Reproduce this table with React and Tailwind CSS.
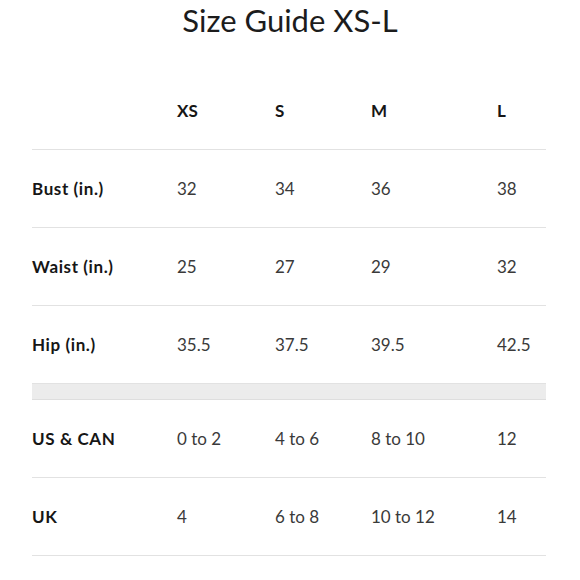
import React from "react";

const sizes = ["XS", "S", "M", "L"];

const bodyRows = [
  { label: "Bust (in.)", values: ["32", "34", "36", "38"] },
  { label: "Waist (in.)", values: ["25", "27", "29", "32"] },
  { label: "Hip (in.)", values: ["35.5", "37.5", "39.5", "42.5"] },
];

const countryRows = [
  { label: "US & CAN", values: ["0 to 2", "4 to 6", "8 to 10", "12"] },
  { label: "UK", values: ["4", "6 to 8", "10 to 12", "14"] },
];

function Row({ label, values, bold }) {
  return (
    <div className="grid grid-cols-[145px_98px_96px_126px_1fr] items-center h-[78px] border-b border-[#e2e2e2]">
      <p className="font-bold text-[#161616] tracking-[0.6px]">{label}</p>
      {values.map((v, i) => (
        <p key={i} className={bold ? "font-bold text-[#161616]" : "text-[#3a3a3a]"}>
          {v}
        </p>
      ))}
    </div>
  );
}

export default function App() {
  return (
    <div
      className="w-[580px] h-[580px] bg-white overflow-hidden text-[17px]"
      style={{ fontFamily: "Lato, 'Open Sans', sans-serif" }}
    >
      <h1 className="h-[40px] leading-[40px] text-[31px] text-center text-[#1c1c1c] mb-[32px]">
        Size Guide XS-L
      </h1>
      <div className="ml-[32px] w-[514px]">
        <Row label="" values={sizes} bold />
        {bodyRows.map((r) => (
          <Row key={r.label} label={r.label} values={r.values} />
        ))}
        <div className="h-[16px] bg-[#ececec] border-b border-[#dedede]" />
        {countryRows.map((r) => (
          <Row key={r.label} label={r.label} values={r.values} />
        ))}
      </div>
    </div>
  );
}
